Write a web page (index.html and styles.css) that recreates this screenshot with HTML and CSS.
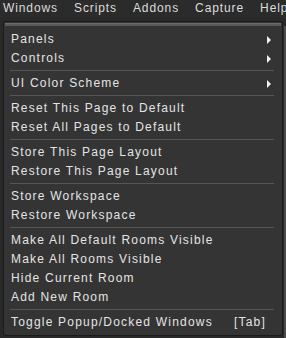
FILE: index.html
```html
<!DOCTYPE html>
<html lang="en">
<head>
    <meta charset="UTF-8">
    <title>Windows Menu</title>
    <link rel="stylesheet" href="styles.css">
</head>
<body>
    <div class="menubar">
        <span>Windows</span>
        <span>Scripts</span>
        <span>Addons</span>
        <span>Capture</span>
        <span>Help</span>
    </div>
    <div class="stage">
        <div class="popup">
            <div class="grip"></div>
            <div class="item sub">Panels</div>
            <div class="item sub">Controls</div>
            <div class="sep"></div>
            <div class="item sub">UI Color Scheme</div>
            <div class="sep"></div>
            <div class="item">Reset This Page to Default</div>
            <div class="item">Reset All Pages to Default</div>
            <div class="sep"></div>
            <div class="item">Store This Page Layout</div>
            <div class="item">Restore This Page Layout</div>
            <div class="sep"></div>
            <div class="item">Store Workspace</div>
            <div class="item">Restore Workspace</div>
            <div class="sep"></div>
            <div class="item">Make All Default Rooms Visible</div>
            <div class="item">Make All Rooms Visible</div>
            <div class="item">Hide Current Room</div>
            <div class="item">Add New Room</div>
            <div class="sep"></div>
            <div class="item">Toggle Popup/Docked Windows <span class="key">[Tab]</span></div>
        </div>
        <div class="edge"></div>
    </div>
</body>
</html>
```

FILE: styles.css
```css
body {
    margin: 0;
    width: 286px;
    height: 338px;
    overflow: hidden;
    background: #2a2a2a;
    font-family: "Liberation Sans", Arial, sans-serif;
    font-size: 12px;
    letter-spacing: 1.2px;
    color: #e4e4e4;
}
.menubar {
    height: 18px;
    background: #2b2b2b;
    display: flex;
    gap: 16px;
    padding-left: 3px;
    line-height: 16px;
    white-space: nowrap;
    letter-spacing: 0.9px;
    color: #dcdcdc;
}
.stage {
    display: flex;
    height: 320px;
    background: #292929;
}
.popup {
    box-sizing: border-box;
    width: 280px;
    height: 315px;
    margin: 3px 0 0 3px;
    background: #343434;
    border: 1px solid #1b1b1b;
    border-radius: 3px;
    padding-top: 1px;
    flex-shrink: 0;
}
.grip {
    height: 2px;
    margin: 0 1px 4px;
    background: #5a5a5a;
    border-top: 1px solid #6b6b6b;
}
.item {
    height: 19px;
    line-height: 19px;
    padding: 0 11px 0 7px;
    display: flex;
    justify-content: space-between;
    align-items: center;
    white-space: nowrap;
}
.sub::after {
    content: "";
    border-left: 4px solid #f2f2f2;
    border-top: 4px solid transparent;
    border-bottom: 4px solid transparent;
}
.key {
    margin-right: 5px;
}
.sep {
    height: 1px;
    margin: 2px 8px 3px 6px;
    background: #565656;
}
.edge {
    flex: 1;
    margin: 8px 0 0 1px;
    background: #4d4d4d;
}
```
